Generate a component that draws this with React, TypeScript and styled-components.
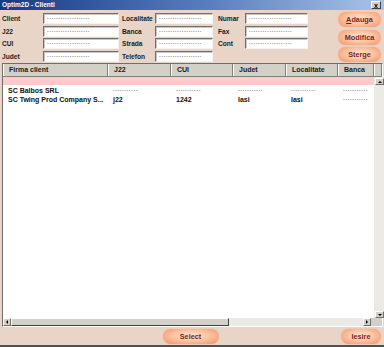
import styled, { createGlobalStyle } from "styled-components";

const GlobalStyle = createGlobalStyle`
  html, body {
    margin: 0;
    padding: 0;
    background: #ffffff;
  }
  body {
    font-family: "Liberation Sans", Arial, sans-serif;
  }
`;

const Window = styled.div`
  width: 384px;
  height: 347px;
  box-sizing: border-box;
  display: flex;
  flex-direction: column;
  background: #e8d5c8;
  border-bottom: 2px solid #505050;
  overflow: hidden;
`;

const TitleBar = styled.div`
  height: 10px;
  flex: none;
  display: flex;
  align-items: center;
  justify-content: space-between;
  padding: 0 3px 0 2px;
  background: linear-gradient(90deg, #163a86 0%, #5a7fc0 55%, #a9c3e8 100%);
`;

const Title = styled.span`
  color: #ffffff;
  font-size: 6.5px;
  font-weight: bold;
  line-height: 10px;
`;

const CloseBox = styled.div`
  width: 10px;
  height: 8px;
  box-sizing: border-box;
  background: #d4d0c8;
  border: 1px solid;
  border-color: #ffffff #404040 #404040 #ffffff;
  display: flex;
  align-items: center;
  justify-content: center;
  font-size: 7px;
  font-weight: bold;
  line-height: 1;
  color: #000;
`;

const TopArea = styled.div`
  height: 53px;
  flex: none;
  box-sizing: border-box;
  display: flex;
  padding: 3px 3px 0 2px;
`;

const FieldColumn = styled.div<{ $offset: number }>`
  display: flex;
  flex-direction: column;
  gap: 1.5px;
  margin-left: ${(p) => p.$offset}px;
`;

const Field = styled.div`
  display: flex;
  align-items: center;
  height: 11px;
`;

const Label = styled.span<{ $w: number }>`
  width: ${(p) => p.$w}px;
  font-size: 6.6px;
  font-weight: bold;
  color: #1c1c1c;
  white-space: nowrap;
`;

const Input = styled.div<{ $w: number }>`
  width: ${(p) => p.$w}px;
  height: 11px;
  box-sizing: border-box;
  background: #ffffff;
  border: 1px solid;
  border-color: #6f6f6f #f4f4f4 #f4f4f4 #6f6f6f;
  box-shadow: inset 1px 1px 0 #c8c8c8;
  font-size: 5px;
  letter-spacing: 0.6px;
  line-height: 8px;
  color: #404040;
  padding-left: 3px;
  overflow: hidden;
  white-space: nowrap;
`;

const ButtonColumn = styled.div`
  margin-left: auto;
  margin-top: -1px;
  display: flex;
  flex-direction: column;
  gap: 2.5px;
`;

const Pill = styled.div<{ $w: number }>`
  width: ${(p) => p.$w}px;
  height: 15px;
  box-sizing: border-box;
  border-radius: 8px;
  background: radial-gradient(
    ellipse at 50% 45%,
    #ffe6d4 0%,
    #fcc4a2 45%,
    #f39e76 85%,
    #ea9570 100%
  );
  box-shadow: 0 0 1px 0.5px #f1c2a8;
  display: flex;
  align-items: center;
  justify-content: center;
  font-size: 7.3px;
  font-weight: bold;
  color: #7b1e22;
  white-space: nowrap;
`;

const Accel = styled.span`
  text-decoration: underline;
`;

const Table = styled.div`
  flex: 1;
  display: flex;
  flex-direction: column;
  margin: 0 1px 0 2px;
  border: 1px solid;
  border-color: #6e6e6e #ffffff #ffffff #6e6e6e;
  background: #ffffff;
  min-height: 0;
`;

const HeaderRow = styled.div`
  height: 13px;
  flex: none;
  display: flex;
  background: #d4d0c8;
  border-bottom: 1px solid #808080;
  box-sizing: border-box;
`;

const HeaderCell = styled.div<{ $w?: number }>`
  width: ${(p) => (p.$w ? `${p.$w}px` : "auto")};
  flex: ${(p) => (p.$w ? "none" : "1")};
  box-sizing: border-box;
  border-left: 1px solid #ffffff;
  border-right: 1px solid #808080;
  padding-left: 5px;
  font-size: 7px;
  font-weight: bold;
  line-height: 12px;
  color: #1a1a1a;
  white-space: nowrap;
  overflow: hidden;
`;

const BodyRow = styled.div`
  flex: 1;
  display: flex;
  min-height: 0;
`;

const Rows = styled.div`
  flex: 1;
  display: flex;
  flex-direction: column;
`;

const NewRow = styled.div`
  height: 8px;
  background: #ffcaca;
  margin-bottom: 1px;
`;

const DataRow = styled.div`
  height: 9px;
  display: flex;
`;

const Cell = styled.div<{ $w: number; $dash?: boolean }>`
  width: ${(p) => p.$w}px;
  flex: none;
  box-sizing: border-box;
  padding-left: 5px;
  font-size: ${(p) => (p.$dash ? "5px" : "7px")};
  letter-spacing: ${(p) => (p.$dash ? "0.6px" : "0")};
  font-weight: ${(p) => (p.$dash ? "normal" : "bold")};
  color: ${(p) => (p.$dash ? "#333" : "#111")};
  line-height: 9px;
  white-space: nowrap;
  overflow: hidden;
`;

const VScroll = styled.div`
  width: 11px;
  flex: none;
  display: flex;
  flex-direction: column;
  justify-content: space-between;
  background: #ebeae6;
  padding: 1px 1px 0 1px;
  box-sizing: border-box;
`;

const ArrowBox = styled.div<{ $w: number; $h: number }>`
  width: ${(p) => p.$w}px;
  height: ${(p) => p.$h}px;
  box-sizing: border-box;
  background: #d4d0c8;
  border: 1px solid;
  border-color: #ffffff #6e6e6e #6e6e6e #ffffff;
  display: flex;
  align-items: center;
  justify-content: center;
  flex: none;
`;

const HScrollRow = styled.div`
  height: 8px;
  flex: none;
  display: flex;
`;

const HTrack = styled.div`
  flex: 1;
  display: flex;
  background: #ebeae6;
`;

const Thumb = styled.div`
  width: 218px;
  box-sizing: border-box;
  background: #d4d0c8;
  border: 1px solid;
  border-color: #ffffff #404040 #404040 #ffffff;
`;

const Spacer = styled.div`
  flex: 1;
`;

const Corner = styled.div`
  width: 11px;
  flex: none;
  background: #d4d0c8;
`;

const Footer = styled.div`
  height: 18px;
  flex: none;
  display: grid;
  grid-template-columns: 1fr auto 1fr;
  align-items: center;
  padding: 0 3px 0 0;
`;

const FooterEnd = styled.div`
  justify-self: end;
`;

const Tri = ({ dir }: { dir: "up" | "down" | "left" | "right" }) => {
  const pts = {
    up: "0,3 2,1 4,3",
    down: "0,1 2,3 4,1",
    left: "3,0 1,2 3,4",
    right: "1,0 3,2 1,4",
  }[dir];
  return (
    <svg width="4" height="4" viewBox="0 0 4 4">
      <polygon points={pts} fill="#000" />
    </svg>
  );
};

const widths = [105, 63, 62, 53, 52, 36];
const headers = ["Firma client", "J22", "CUI", "Judet", "Localitate", "Banca"];
const dash = "-----------";
const clients = [
  ["SC Balbos SRL", dash, dash, dash, dash, dash],
  ["SC Twing Prod Company S...", "j22", "1242", "Iasi", "Iasi", dash],
];

const placeholder = "-------------------";

export default function App() {
  return (
    <>
      <GlobalStyle />
      <Window>
        <TitleBar>
          <Title>Optim2D - Clienti</Title>
          <CloseBox>x</CloseBox>
        </TitleBar>
        <TopArea>
          <FieldColumn $offset={0}>
            {["Client", "J22", "CUI", "Judet"].map((l) => (
              <Field key={l}>
                <Label $w={41}>{l}</Label>
                <Input $w={76}>{placeholder}</Input>
              </Field>
            ))}
          </FieldColumn>
          <FieldColumn $offset={3}>
            {["Localitate", "Banca", "Strada", "Telefon"].map((l) => (
              <Field key={l}>
                <Label $w={33}>{l}</Label>
                <Input $w={58}>{placeholder}</Input>
              </Field>
            ))}
          </FieldColumn>
          <FieldColumn $offset={5}>
            {["Numar", "Fax", "Cont"].map((l) => (
              <Field key={l}>
                <Label $w={27}>{l}</Label>
                <Input $w={63}>{placeholder}</Input>
              </Field>
            ))}
          </FieldColumn>
          <ButtonColumn>
            <Pill $w={43}>
              <Accel>A</Accel>dauga
            </Pill>
            <Pill $w={43}>Modifica</Pill>
            <Pill $w={43}>Sterge</Pill>
          </ButtonColumn>
        </TopArea>
        <Table>
          <HeaderRow>
            {headers.map((h, i) => (
              <HeaderCell key={h} $w={widths[i]}>
                {h}
              </HeaderCell>
            ))}
            <HeaderCell />
          </HeaderRow>
          <BodyRow>
            <Rows>
              <NewRow />
              {clients.map((row) => (
                <DataRow key={row[0]}>
                  {row.map((v, i) => (
                    <Cell key={i} $w={widths[i]} $dash={v === dash}>
                      {v}
                    </Cell>
                  ))}
                </DataRow>
              ))}
            </Rows>
            <VScroll>
              <ArrowBox $w={9} $h={7}>
                <Tri dir="up" />
              </ArrowBox>
              <ArrowBox $w={9} $h={7}>
                <Tri dir="down" />
              </ArrowBox>
            </VScroll>
          </BodyRow>
          <HScrollRow>
            <HTrack>
              <ArrowBox $w={8} $h={8}>
                <Tri dir="left" />
              </ArrowBox>
              <Thumb />
              <Spacer />
              <ArrowBox $w={8} $h={8}>
                <Tri dir="right" />
              </ArrowBox>
            </HTrack>
            <Corner />
          </HScrollRow>
        </Table>
        <Footer>
          <span />
          <Pill $w={56}>Select</Pill>
          <FooterEnd>
            <Pill $w={40}>Iesire</Pill>
          </FooterEnd>
        </Footer>
      </Window>
    </>
  );
}
